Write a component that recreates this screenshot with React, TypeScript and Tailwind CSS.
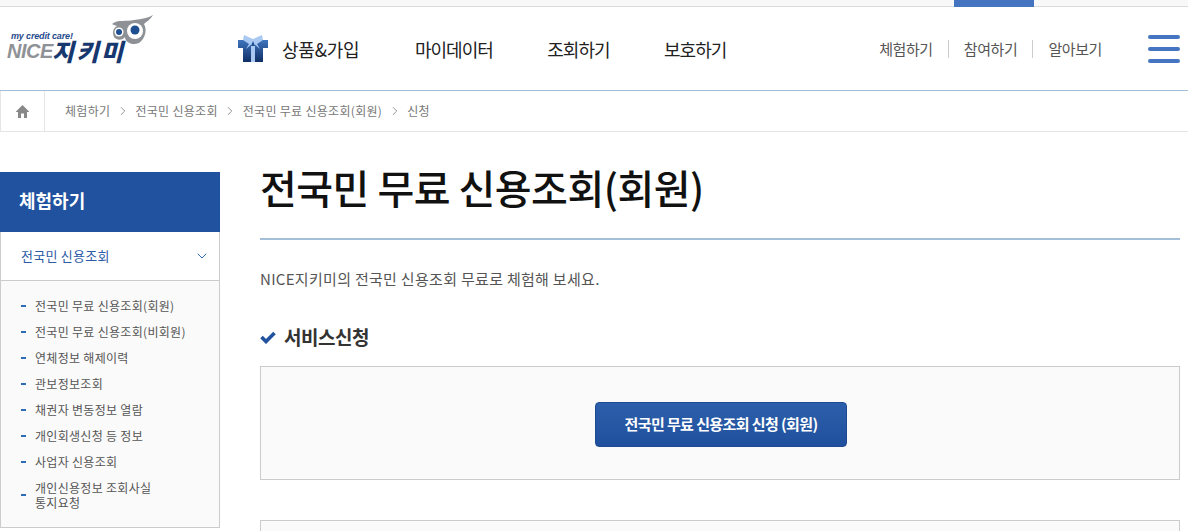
import { ChevronDown, ChevronRight } from 'lucide-react';

const font = "font-['Noto_Sans_CJK_KR','Noto_Sans',sans-serif]";

const mainMenu = ['마이데이터', '조회하기', '보호하기'];
const utilMenu = ['체험하기', '참여하기', '알아보기'];
const crumbs = ['체험하기', '전국민 신용조회', '전국민 무료 신용조회(회원)', '신청'];
const subMenu = [
  '전국민 무료 신용조회(회원)',
  '전국민 무료 신용조회(비회원)',
  '연체정보 해제이력',
  '관보정보조회',
  '채권자 변동정보 열람',
  '개인회생신청 등 정보',
  '사업자 신용조회',
];

function Logo() {
  return (
    <div className="relative h-[60px] w-[160px] shrink-0">
      <svg className="absolute left-[112px] top-[1px]" width="41" height="30" viewBox="0 0 41 30">
        <path d="M0 9C6 4 14 7 22 5C30 4 36 3 41 0C38 5 34 7 32 9C35 14 34 23 27 28C20 31 13 27 13 22C11 25 5 26 2 22C0 18 1 13 5 11C3 10 1 10 0 9Z" fill="#8e9296" />
        <circle cx="23" cy="16" r="8" fill="#fff" />
        <circle cx="7" cy="17" r="4.5" fill="#fff" />
        <circle cx="23" cy="15" r="4.5" fill="#1d4f91" />
        <circle cx="7" cy="17" r="3" fill="#1d4f91" />
      </svg>
      <span className="absolute left-[11px] top-[17px] text-[9px] font-bold italic leading-[10px] tracking-[-0.15px] text-[#1f4a8c] font-['Liberation_Sans',sans-serif]">
        my credit care!
      </span>
      <div className="absolute left-[7px] top-[28px] flex h-[18px] items-center">
        <span className="text-[20px] font-bold italic leading-[18px] tracking-[-0.5px] text-[#8f9296] font-['Liberation_Sans',sans-serif]">NICE</span>
        <span className={`-ml-[1px] text-[24px] font-black italic leading-[18px] tracking-[2.5px] text-[#17376f] ${font}`}>지키미</span>
      </div>
    </div>
  );
}

export default function App() {
  return (
    <div className={`h-[531px] w-[1188px] overflow-hidden bg-white ${font}`}>
      <div className="flex h-[7px] justify-end border-b border-[#dcdcdc] bg-[#f8f8f8] pr-[154px]">
        <div className="h-[7px] w-[80px] bg-[#4575c0]" />
      </div>

      <header className="flex h-[84px] items-center border-b border-[#a3c0d8] pr-[8px]">
        <div className="-mt-[10px] mr-[78px]">
          <Logo />
        </div>
        <nav className="flex items-center">
          <div className="flex w-[177px] items-center gap-[14px]">
            <svg width="30" height="28" viewBox="0 0 30 28">
              <defs>
                <linearGradient id="gift" x1="0" y1="0" x2="0" y2="1">
                  <stop offset="0" stopColor="#3f74bd" />
                  <stop offset="1" stopColor="#0f2f66" />
                </linearGradient>
              </defs>
              <path d="M0 5H30V13H25V27H5V13H0Z" fill="url(#gift)" />
              <path d="M13 8H17V27H13Z" fill="#a9c8f2" />
              <path d="M6 0L15 4L24 0L25 5L19 9L22 14L15 8L8 14L11 9L5 5Z" fill="#a9c8f2" />
              <path d="M15 6L17 11H13Z" fill="#1d4f91" />
            </svg>
            <span className="text-[18px] leading-[26px] tracking-[-0.2px] text-[#222]">상품&가입</span>
          </div>
          {mainMenu.map((m) => (
            <span key={m} className="mr-[54.5px] text-[18px] leading-[26px] tracking-[-1px] text-[#222]">
              {m}
            </span>
          ))}
        </nav>
        <div className="ml-auto flex items-center">
          {utilMenu.map((m, i) => (
            <span
              key={m}
              className={`text-[15px] leading-[18px] tracking-[-0.4px] text-[#555] ${i > 0 ? 'ml-[15px] border-l border-[#ccc] pl-[15px]' : ''}`}
            >
              {m}
            </span>
          ))}
          <div className="ml-[46px] flex w-[32px] flex-col gap-[8px]">
            <span className="h-[4px] rounded-full bg-[#4575c0]" />
            <span className="h-[4px] rounded-full bg-[#4575c0]" />
            <span className="h-[4px] rounded-full bg-[#4575c0]" />
          </div>
        </div>
      </header>

      <div className="flex h-[41px] items-center border-b border-[#e5e5e5]">
        <div className="flex h-full w-[45px] items-center justify-center border-x border-[#e5e5e5]">
          <svg width="13" height="13" viewBox="0 0 13 13">
            <path d="M6.5 0L13 6.5V7H11V13H8V8.5H5V13H2V7H0V6.5Z" fill="#888" />
          </svg>
        </div>
        <div className="ml-[20px] flex items-center text-[12px] tracking-[0.3px] text-[#777]">
          {crumbs.map((c, i) => (
            <span key={c} className="flex items-center">
              {c}
              {i < crumbs.length - 1 && <ChevronRight size={14} strokeWidth={1.2} className="mx-[5.5px] text-[#666]" />}
            </span>
          ))}
        </div>
      </div>

      <div className="flex items-start gap-[40px] pt-[40px]">
        <aside className="w-[220px] shrink-0">
          <div className="flex h-[60px] items-center bg-[#20529f] pb-[3px] pl-[19px] text-[18px] font-bold tracking-[0px] text-white">
            체험하기
          </div>
          <div className="border-x border-b border-[#ccc]">
            <div className="flex h-[49px] items-center justify-between border-b border-[#ccc] pl-[20px] pr-[9px] text-[13px] tracking-[0.25px] text-[#2d5ba6]">
              전국민 신용조회
              <ChevronDown size={16} strokeWidth={1.5} className="text-[#2d6db5]" />
            </div>
            <ul className="bg-[#fafafa] pb-[17px] pt-[12px]">
              {subMenu.map((s) => (
                <li key={s} className="flex h-[26px] items-center gap-[9px] pl-[20px] text-[12px] tracking-[0.3px] text-[#555]">
                  <span className="h-[2px] w-[5px] bg-[#2d6db5]" />
                  {s}
                </li>
              ))}
              <li className="flex items-center gap-[9px] pl-[20px] pt-[5px] text-[12px] leading-[15px] tracking-[0.3px] text-[#555]">
                <span className="h-[2px] w-[5px] bg-[#2d6db5]" />
                <span>
                  개인신용정보 조회사실
                  <br />
                  통지요청
                </span>
              </li>
            </ul>
          </div>
        </aside>

        <main className="w-[920px]">
          <h1 className="h-[68px] border-b-2 border-[#a3c0d8] text-[40px] font-medium leading-[30px] tracking-[-0.5px] text-[#111]">
            전국민 무료 신용조회(회원)
          </h1>
          <p className="mt-[28px] text-[15px] leading-[22px] tracking-[0.3px] text-[#555]">
            NICE지키미의 전국민 신용조회 무료로 체험해 보세요.
          </p>
          <h2 className="mt-[34px] flex items-center gap-[8px] text-[19px] font-bold leading-[26px] tracking-[-0.5px] text-[#333]">
            <svg width="16" height="13" viewBox="0 0 16 13" fill="none">
              <path d="M1.5 6L6 10.5L14.5 2" stroke="#20529f" strokeWidth="3.6" />
            </svg>
            서비스신청
          </h2>
          <div className="mt-[16px] flex h-[114px] items-center justify-center border border-[#ccc] bg-[#fafafa] pl-[2px]">
            <button className="mt-[2px] h-[45px] w-[252px] rounded-[4px] border border-[#1d4a90] bg-gradient-to-b from-[#2c5fab] to-[#20509d] text-[15px] font-bold tracking-[-0.6px] text-white">
              전국민 무료 신용조회 신청 (회원)
            </button>
          </div>
          <div className="mt-[40px] h-[60px] border border-[#ccc] bg-[#fafafa]" />
        </main>
      </div>
    </div>
  );
}
